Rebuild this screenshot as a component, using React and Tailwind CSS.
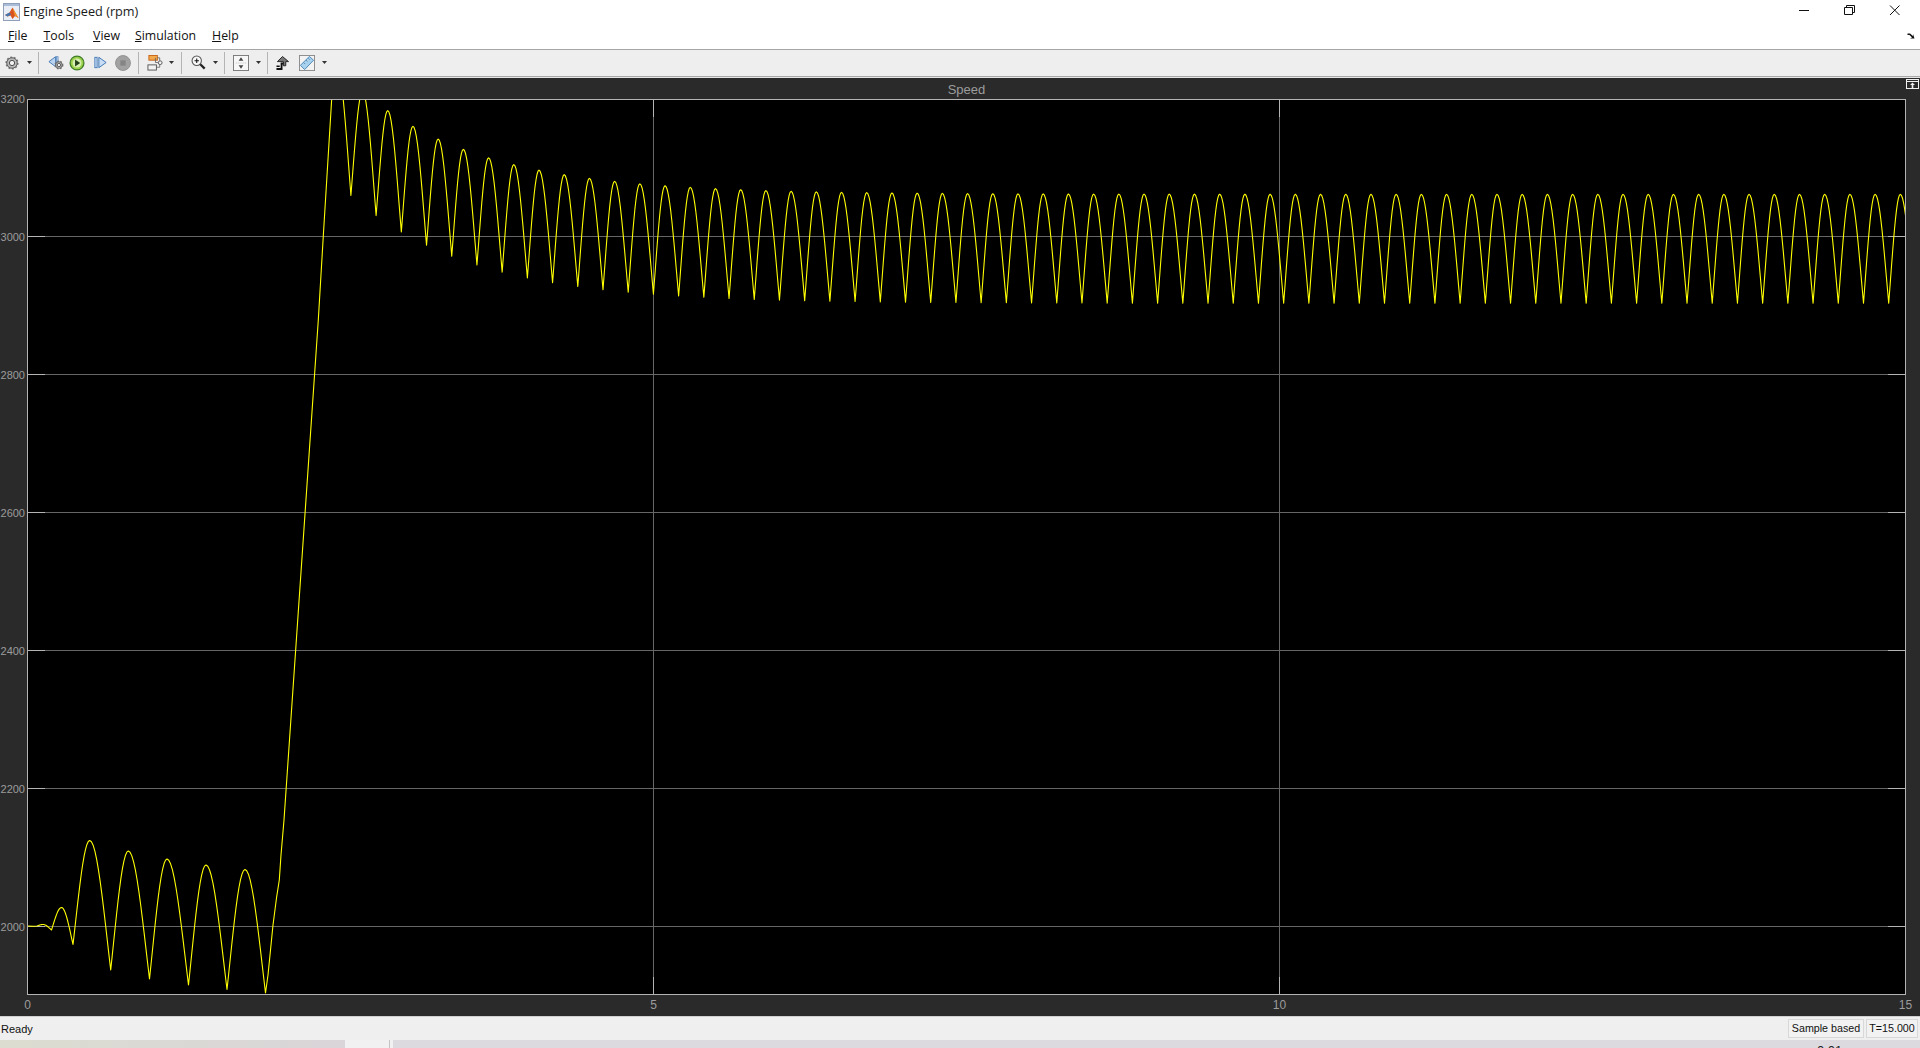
const PEAK0 = 337.3, PERIOD = 25.21, FALL = 13.6;

function shape(u) {
  return 0.88 * Math.sin((u * Math.PI) / 2) + 0.12 * (1 - Math.cos(Math.PI * u)) / 2;
}

function buildTrace() {
  const pts = [[27.5, 926], [33, 926.3], [37, 926]];
  const early = [
    [43, 924.5], [51.5, 930], [61.5, 907.5], [73, 944.5], [89.7, 840.5], [110.7, 970],
    [128.3, 851], [149.5, 979], [167, 859], [188.5, 985], [206, 865], [227, 989.5],
    [245, 869.5], [265.5, 993],
  ];
  const ext = [[37, 926], ...early];
  const halves = (list) => {
    for (let i = 1; i < list.length; i++) {
      const [x0, y0] = list[i - 1];
      const [x1, y1] = list[i];
      const rising = y1 < y0;
      for (let k = 1; k <= 12; k++) {
        const u = k / 12;
        const f = rising ? shape(u) : 1 - shape(1 - u);
        pts.push([x0 + (x1 - x0) * u, y0 + (y1 - y0) * f]);
      }
    }
  };
  halves(ext);
  pts.push([268, 975], [273, 925], [276.5, 898], [279.3, 880], [281, 855], [284, 820], [318.3, 320], [323.3, 236], [331.7, 99], [334, 79]);
  const list = [[PEAK0, 68]];
  for (let n = 0; n < 64; n++) {
    const pk = PEAK0 + PERIOD * n;
    const mn = pk + FALL;
    list.push([mn, 303.3 - 87.3 * Math.exp(-(mn - 376.7) / 122)]);
    const nx = pk + PERIOD;
    list.push([nx, 194.3 - 83.8 * Math.exp(-(nx - 387.5) / 121.6)]);
  }
  pts.push(list[0]);
  halves(list);
  return pts.filter((p) => p[0] < 1930).map((p) => `${p[0].toFixed(2)},${p[1].toFixed(2)}`).join(" ");
}

const TRACE = buildTrace();
const YS = [236.5, 374.5, 512.5, 650.5, 788.5, 926.5];
const XS = [653.5, 1279.5];
const YLABELS = [["3200", 99], ["3000", 236.5], ["2800", 374.5], ["2600", 512.5], ["2400", 650.5], ["2200", 788.5], ["2000", 926.5]];
const XLABELS = [["0", 27.5], ["5", 653.5], ["10", 1279.5], ["15", 1905.5]];

function Chart() {
  return (
    <svg width="1879" height="896" viewBox="27 99 1879 896" className="block shrink-0">
      <defs>
        <clipPath id="plot"><rect x="27" y="99" width="1879" height="896" /></clipPath>
      </defs>
      <rect x="27" y="99" width="1879" height="896" fill="#000" />
      <g stroke="#666666" strokeWidth="1">
        {YS.map((y) => <line key={y} x1="27" x2="1906" y1={y} y2={y} />)}
        {XS.map((x) => <line key={x} x1={x} x2={x} y1="99" y2="995" />)}
      </g>
      <g stroke="#b4b4b4" strokeWidth="1">
        {YS.map((y) => <line key={y} x1="27" x2="45" y1={y} y2={y} />)}
        {YS.map((y) => <line key={y} x1="1888" x2="1906" y1={y} y2={y} />)}
        {XS.map((x) => <line key={x} x1={x} x2={x} y1="99" y2="117" />)}
        {XS.map((x) => <line key={x} x1={x} x2={x} y1="977" y2="995" />)}
      </g>
      <polyline points={TRACE} fill="none" stroke="#ffff00" strokeWidth="1.1" strokeLinejoin="round" clipPath="url(#plot)" />
      <rect x="27.5" y="99.5" width="1878" height="895" fill="none" stroke="#b4b4b4" strokeWidth="1" />
    </svg>
  );
}

function Caret() {
  return <svg width="5" height="3" viewBox="0 0 5 3" className="block shrink-0"><path d="M0 0H5L2.5 3Z" fill="#333" /></svg>;
}
function Sep() {
  return <div className="w-px h-[22px] bg-[#b4b4b4] shrink-0" />;
}
function GearShape({ cx, cy, r }) {
  return (
    <g>
      <circle cx={cx} cy={cy} r={r + 0.6} fill="none" stroke="#777" strokeWidth="1.6" strokeDasharray="2 1.8" />
      <circle cx={cx} cy={cy} r={r} fill="#b8b8b8" stroke="#555" strokeWidth="1" />
      <circle cx={cx} cy={cy} r={r * 0.5} fill="#f2f2f2" stroke="#444" strokeWidth="1" />
    </g>
  );
}

function Logo() {
  return (
    <svg width="18" height="18" viewBox="0 0 18 18" className="shrink-0">
      <rect x="0.5" y="0.5" width="16" height="17" fill="#e9eef6" stroke="#8f9fb8" />
      <rect x="1" y="1" width="15" height="2" fill="#a9bdd8" />
      <path d="M2 12L6.5 9.5L9.5 4.5L12 9L15.5 15L12 13L9.5 16L7.5 12.5L4.5 13.5Z" fill="#d9541e" />
      <path d="M2 12L6.5 9.5L8 11.5L4.5 13.5Z" fill="#3f78b5" />
      <path d="M9.5 4.5L12 9L15.5 15L12 13Z" fill="#f09a2c" />
    </svg>
  );
}

function Toolbar() {
  return (
    <div className="h-[26px] bg-[#eeeeee] flex items-center pl-[4px] pb-[1px] shrink-0">
      <svg width="16" height="16" viewBox="0 0 17 17" className="shrink-0"><GearShape cx={8.5} cy={8.5} r={5.6} /></svg>
      <div className="ml-[7px]"><Caret /></div>
      <div className="ml-[6px]"><Sep /></div>
      <svg width="16" height="15" viewBox="0 0 19 18" className="ml-[9px] shrink-0">
        <path d="M9 2L1 8L9 14Z" fill="#b9d3ee" stroke="#4d7fb8" strokeWidth="1.2" />
        <rect x="10" y="2" width="2" height="12" fill="#b9d3ee" stroke="#4d7fb8" strokeWidth="0.8" />
        <GearShape cx={13} cy={12} r={4} />
      </svg>
      <svg width="16" height="16" viewBox="0 0 18 18" className="ml-[5px] shrink-0">
        <circle cx="9" cy="9" r="7.8" fill="#9bd04a" stroke="#3f7d2a" strokeWidth="1.4" />
        <circle cx="9" cy="9" r="5" fill="#d6efb0" />
        <path d="M6.8 5.2L12.6 9L6.8 12.8Z" fill="#24401a" />
      </svg>
      <svg width="13" height="13" viewBox="0 0 15 14" className="ml-[9px] shrink-0">
        <rect x="1" y="1" width="2.6" height="12" fill="#c9def4" stroke="#3c74b4" strokeWidth="1" />
        <path d="M5.6 1L14 7L5.6 13Z" fill="#c9def4" stroke="#3c74b4" strokeWidth="1.1" />
      </svg>
      <svg width="16" height="16" viewBox="0 0 18 18" className="ml-[8px] shrink-0">
        <circle cx="9" cy="9" r="8.4" fill="#a2a2a2" stroke="#8d8d8d" />
        <rect x="6" y="6" width="6" height="6" fill="#858585" />
      </svg>
      <div className="ml-[7px]"><Sep /></div>
      <svg width="16" height="16" viewBox="0 0 17 17" className="ml-[8px] shrink-0">
        <rect x="2" y="0.5" width="9" height="5" fill="#f3a94c" stroke="#c8641a" />
        <rect x="1" y="10.5" width="9" height="5.5" fill="#f2f2f2" stroke="#555" />
        <circle cx="14" cy="8.2" r="2" fill="#f2f2f2" stroke="#555" />
        <path d="M11 3H13.5V6M12 8H9V3M10 13H13.5V10.5" fill="none" stroke="#666" strokeWidth="0.9" />
      </svg>
      <div className="ml-[6px]"><Caret /></div>
      <div className="ml-[7px]"><Sep /></div>
      <svg width="15" height="15" viewBox="0 0 17 17" className="ml-[9px] shrink-0">
        <circle cx="6.5" cy="6.5" r="5.3" fill="#f8f8f8" stroke="#555" strokeWidth="1.2" />
        <path d="M4 6.5H9M6.5 4V9" stroke="#111" strokeWidth="1.2" />
        <path d="M10.5 10.5L15.5 15.5" stroke="#222" strokeWidth="2.6" />
      </svg>
      <div className="ml-[7px]"><Caret /></div>
      <div className="ml-[6px]"><Sep /></div>
      <svg width="16" height="16" viewBox="0 0 17 17" className="ml-[8px] shrink-0">
        <rect x="0.5" y="0.5" width="16" height="16" fill="#f7f7f7" stroke="#777" />
        <path d="M8.5 2.5L11 6H6ZM8.5 14.5L6 11H11Z" fill="#444" />
        <path d="M3 8.5H14" stroke="#bbb" strokeWidth="1" strokeDasharray="1 1" />
      </svg>
      <div className="ml-[7px]"><Caret /></div>
      <div className="ml-[6px]"><Sep /></div>
      <svg width="13" height="14" viewBox="0 0 14 15" className="ml-[8px] shrink-0">
        <path d="M0.5 14H6V8H8.5" fill="none" stroke="#111" strokeWidth="2" />
        <path d="M7 0.5L13.5 6H10.5V10.5H8V6H1.5Z" fill="#777" stroke="#222" strokeWidth="1" />
        <path d="M0.5 11H4" stroke="#111" strokeWidth="1.6" />
      </svg>
      <svg width="16" height="16" viewBox="0 0 17 17" className="ml-[10px] shrink-0">
        <rect x="0.5" y="0.5" width="16" height="16" fill="#f3f3f3" stroke="#888" />
        <path d="M1.5 11L11 1.5L15.5 5.5L6 15.5Z" fill="#a9d2ee" stroke="#4c86b8" strokeWidth="1" />
        <path d="M5 8L6.5 9.5M7.5 5.5L9 7M10 3.5L11.5 5" stroke="#3e6f98" strokeWidth="0.8" />
      </svg>
      <div className="ml-[7px]"><Caret /></div>
    </div>
  );
}

const MENU = [
  ["F", "ile", "ml-[8px]"],
  ["T", "ools", "ml-[16px]"],
  ["V", "iew", "ml-[19px]"],
  ["S", "imulation", "ml-[15px]"],
  ["H", "elp", "ml-[16px]"],
];

export default function App() {
  return (
    <div className="w-[1920px] h-[1048px] overflow-hidden flex flex-col bg-white font-['Open_Sans','Noto_Sans',sans-serif] text-[#111]">
      <div className="h-[24px] bg-white flex items-center shrink-0 relative">
        <div className="ml-[3px]"><Logo /></div>
        <span className="ml-[2px] mb-[2px] text-[12.7px] leading-none text-[#1a1a1a]">Engine Speed (rpm)</span>
        <div className="ml-auto flex items-center">
          <svg width="120" height="20" viewBox="0 0 120 20" className="mr-[1px]">
            <path d="M0 8.5H10" stroke="#111" strokeWidth="1" />
            <path d="M45.5 5.5H53.5V12.5H45.5ZM47.5 5V3.5H55.5V10.5H53.5" fill="none" stroke="#111" strokeWidth="1" />
            <path d="M91 3.5L100.5 13M100.5 3.5L91 13" stroke="#111" strokeWidth="1" />
          </svg>
        </div>
      </div>
      <div className="h-[26px] bg-white flex items-center shrink-0 relative text-[12.3px] leading-none border-b border-[#a6a6a6]">
        {MENU.map(([a, b, m]) => (
          <span key={b} className={m}><span className="underline">{a}</span>{b}</span>
        ))}
        <svg width="8" height="7" viewBox="0 0 8 7" className="ml-auto mr-[5px] mb-[2px]">
          <path d="M0.5 1.5H3L6 4V2L7.5 6.5H3L5 5.5L2.5 3H0.5Z" fill="#111" />
        </svg>
      </div>
      <Toolbar />
      <div className="h-px bg-[#a8a8a8] shrink-0" />
      <div className="h-px bg-[#e4e4e4] shrink-0" />
      <div className="h-[938px] bg-[#2a2a2a] shrink-0 flex flex-col font-['Liberation_Sans',Arial,sans-serif] text-[#9c9c9c] relative">
        <div className="h-[21px] flex items-center justify-center pl-[13px] pt-[2px] text-[13px] leading-none shrink-0 relative">
          <span>Speed</span>
          <svg width="13" height="10" viewBox="0 0 13 10" className="absolute right-[1px] top-[1px]">
            <rect x="0.5" y="0.5" width="12" height="9" fill="#2a2a2a" stroke="#f0f0f0" />
            <path d="M0.5 2.5H12.5" stroke="#f0f0f0" />
            <path d="M6.5 3.5L9 6H7.3V9H5.7V6H4Z" fill="#f0f0f0" />
          </svg>
        </div>
        <div className="flex shrink-0">
          <div className="w-[27px] h-[896px] relative shrink-0 text-[11px] leading-none">
            {YLABELS.map(([t, y]) => (
              <span key={t} className="absolute right-[2px] -translate-y-1/2" style={{ top: y - 99 }}>{t}</span>
            ))}
          </div>
          <Chart />
        </div>
        <div className="h-[21px] relative text-[12px] leading-none shrink-0">
          {XLABELS.map(([t, x]) => (
            <span key={t} className="absolute top-[4px] -translate-x-1/2" style={{ left: x }}>{t}</span>
          ))}
        </div>
      </div>
      <div className="h-[1px] bg-[#d0d0d0] shrink-0" />
      <div className="h-[23px] bg-[#efefef] flex items-center shrink-0 font-['Liberation_Sans',Arial,sans-serif] text-[10.7px] leading-none text-[#111]">
        <span className="ml-[1px] pt-[1px] text-[11px]">Ready</span>
        <div className="ml-auto h-[19px] w-[76px] border border-[#d8d8d8] bg-[#f2f2f2] flex items-center justify-center">Sample based</div>
        <div className="ml-[2px] mr-[2px] h-[19px] w-[52px] border border-[#d8d8d8] bg-[#f2f2f2] flex items-center justify-center">T=15.000</div>
      </div>
      <div className="h-[8px] flex shrink-0 overflow-hidden font-['Liberation_Sans',Arial,sans-serif]">
        <div className="w-[345px] bg-gradient-to-r from-[#dcdcd0] to-[#d9d5d9]" />
        <div className="w-[44px] bg-[#f1f1f1]" />
        <div className="w-px bg-[#c4c4c4]" />
        <div className="w-[3px] bg-[#f1f1f1]" />
        <div className="flex-1 bg-[#dcd9df] relative">
          <span className="absolute left-[1424px] top-[4px] text-[13px] leading-none text-[#222]">0.01</span>
        </div>
      </div>
    </div>
  );
}
